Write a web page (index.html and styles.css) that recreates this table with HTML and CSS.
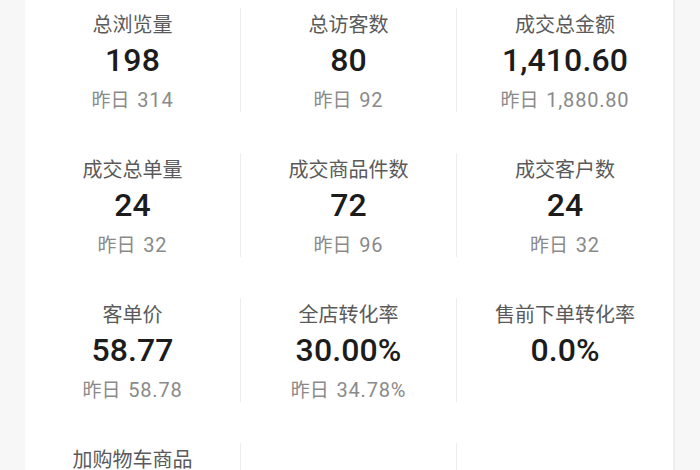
FILE: index.html
```html
<!DOCTYPE html>
<html lang="zh-CN">
<head>
<meta charset="utf-8">
<title>数据概览</title>
<link rel="stylesheet" href="styles.css">
</head>
<body>
<div class="page">
  <div class="panel">
    <div class="grid">
      <div class="cell"><div class="inner"><div class="label">总浏览量</div><div class="value">198</div><div class="sub">昨日 <span class="num">314</span></div></div></div>
      <div class="cell"><div class="inner"><div class="label">总访客数</div><div class="value">80</div><div class="sub">昨日 <span class="num">92</span></div></div></div>
      <div class="cell last"><div class="inner"><div class="label">成交总金额</div><div class="value">1,410.60</div><div class="sub">昨日 <span class="num">1,880.80</span></div></div></div>

      <div class="cell"><div class="inner"><div class="label">成交总单量</div><div class="value">24</div><div class="sub">昨日 <span class="num">32</span></div></div></div>
      <div class="cell"><div class="inner"><div class="label">成交商品件数</div><div class="value">72</div><div class="sub">昨日 <span class="num">96</span></div></div></div>
      <div class="cell last"><div class="inner"><div class="label">成交客户数</div><div class="value">24</div><div class="sub">昨日 <span class="num">32</span></div></div></div>

      <div class="cell"><div class="inner"><div class="label">客单价</div><div class="value">58.77</div><div class="sub">昨日 <span class="num">58.78</span></div></div></div>
      <div class="cell"><div class="inner"><div class="label">全店转化率</div><div class="value">30.00%</div><div class="sub">昨日 <span class="num">34.78%</span></div></div></div>
      <div class="cell last"><div class="inner"><div class="label">售前下单转化率</div><div class="value">0.0%</div></div></div>

      <div class="cell"><div class="inner"><div class="label">加购物车商品</div></div></div>
      <div class="cell"><div class="inner"></div></div>
      <div class="cell last"><div class="inner"></div></div>
    </div>
  </div>
</div>
</body>
</html>
```

FILE: styles.css
```css
html, body {
  margin: 0;
  padding: 0;
  height: 470px;
  overflow: hidden;
  background: #f7f7f7;
}

.page {
  display: flex;
  padding-left: 25px;
  background: #f7f7f7;
  font-family: Roboto, "Noto Sans CJK SC", sans-serif;
}

.panel {
  width: 648px;
  background: #ffffff;
  border-right: 2px solid #efefef;
}

.grid {
  display: grid;
  grid-template-columns: repeat(3, 216px);
}

.cell {
  height: 145px;
  padding-top: 8px;
  box-sizing: border-box;
}

.inner {
  height: 104px;
  border-right: 1px solid #ededed;
  text-align: center;
}

.cell.last .inner {
  border-right: none;
}

.label {
  font-family: "Noto Sans CJK SC", sans-serif;
  font-size: 20px;
  line-height: 32px;
  color: #5a5a5a;
}

.value {
  font-family: Roboto, "Noto Sans CJK SC", sans-serif;
  font-weight: 500;
  font-size: 32px;
  letter-spacing: 0.1px;
  line-height: 40px;
  color: #1c1c1c;
}

.sub {
  font-family: Roboto, "Noto Sans CJK SC", sans-serif;
  font-size: 19px;
  line-height: 40px;
  word-spacing: 3px;
  color: #8a8a8a;
}

.num {
  font-size: 20px;
  letter-spacing: 0.8px;
}
```
